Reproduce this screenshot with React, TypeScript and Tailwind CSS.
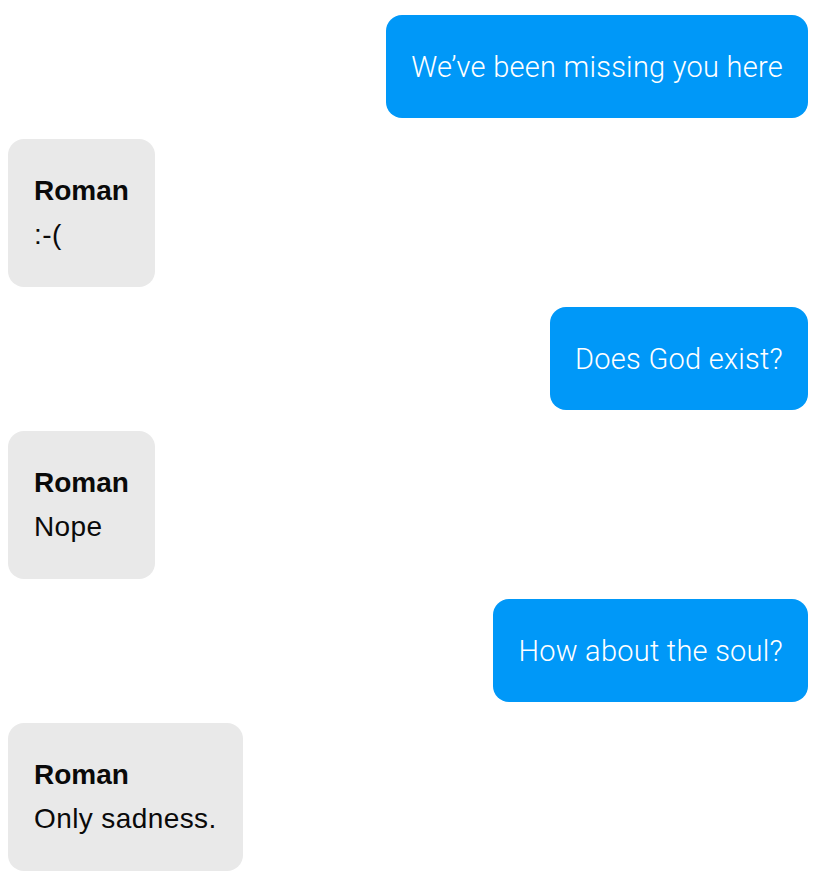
const messages = [
  { from: 'me', text: 'We\u2019ve been missing you here' },
  { from: 'Roman', text: ':-(' },
  { from: 'me', text: 'Does God exist?' },
  { from: 'Roman', text: 'Nope' },
  { from: 'me', text: 'How about the soul?' },
  { from: 'Roman', text: 'Only sadness.' },
];

export default function App() {
  return (
    <div className="min-h-screen bg-white pl-[8px] pr-[13px] pt-[15px] pb-5 font-['Liberation_Sans',Arial,sans-serif]">
      <div className="flex flex-col">
        {messages.map((m, i) =>
          m.from === 'me' ? (
            <div
              key={i}
              className={`self-end rounded-[16px] bg-[#0098f8] px-[25px] py-[29.5px] text-[29px] leading-[44px] text-white font-['Roboto',sans-serif] font-light tracking-[0.25px] ${i === 0 ? '' : 'mt-[20px]'}`}
            >
              {m.text}
            </div>
          ) : (
            <div
              key={i}
              className="mt-[21px] self-start rounded-[16px] bg-[#e9e9e9] px-[26px] py-[30px] text-[28px] leading-[44px] text-[#0a0a0a]"
            >
              <div className="font-bold">{m.from}</div>
              <div className="tracking-[0.4px]">{m.text}</div>
            </div>
          )
        )}
      </div>
    </div>
  );
}
